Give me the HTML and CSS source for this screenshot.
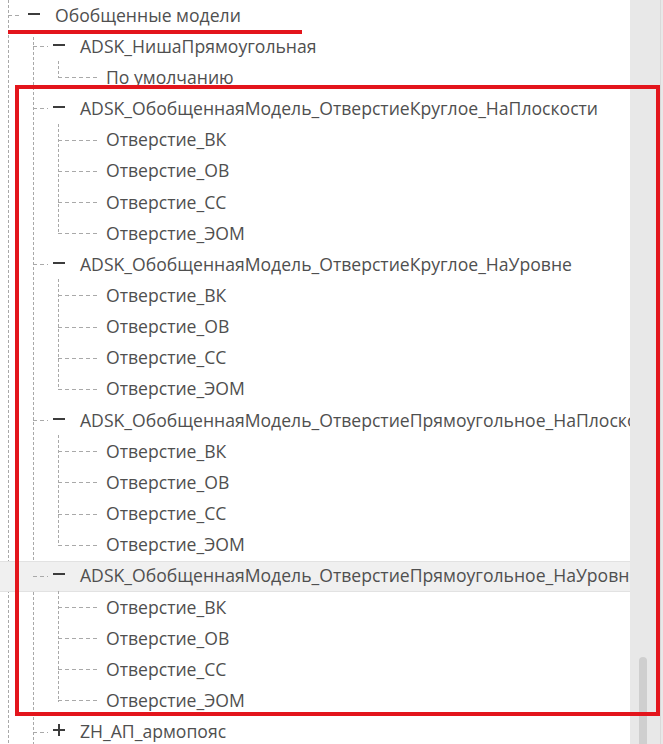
FILE: index.html
```html
<!DOCTYPE html>
<html>
<head>
    <meta charset="utf-8" />
    <title>Диспетчер проекта</title>
    <link rel="stylesheet" href="styles.css">
</head>
<body>
    <div class="browser">
        <div class="tree">
            <ul class="lvl0">
                <li>
                    <div class="row l0"><span class="toggle"></span><span class="label">Обобщенные модели</span></div>
                    <ul class="lvl1">
                        <li>
                            <div class="row l1"><span class="toggle"></span><span class="label">ADSK_НишаПрямоугольная</span></div>
                            <ul class="lvl2">
                                <li><div class="row l2"><span class="label">По умолчанию</span></div></li>
                            </ul>
                        </li>
                        <li>
                            <div class="row l1"><span class="toggle"></span><span class="label">ADSK_ОбобщеннаяМодель_ОтверстиеКруглое_НаПлоскости</span></div>
                            <ul class="lvl2">
                                <li><div class="row l2"><span class="label">Отверстие_ВК</span></div></li>
                                <li><div class="row l2"><span class="label">Отверстие_ОВ</span></div></li>
                                <li><div class="row l2"><span class="label">Отверстие_СС</span></div></li>
                                <li><div class="row l2"><span class="label">Отверстие_ЭОМ</span></div></li>
                            </ul>
                        </li>
                        <li>
                            <div class="row l1"><span class="toggle"></span><span class="label">ADSK_ОбобщеннаяМодель_ОтверстиеКруглое_НаУровне</span></div>
                            <ul class="lvl2">
                                <li><div class="row l2"><span class="label">Отверстие_ВК</span></div></li>
                                <li><div class="row l2"><span class="label">Отверстие_ОВ</span></div></li>
                                <li><div class="row l2"><span class="label">Отверстие_СС</span></div></li>
                                <li><div class="row l2"><span class="label">Отверстие_ЭОМ</span></div></li>
                            </ul>
                        </li>
                        <li>
                            <div class="row l1"><span class="toggle"></span><span class="label">ADSK_ОбобщеннаяМодель_ОтверстиеПрямоугольное_НаПлоскости</span></div>
                            <ul class="lvl2">
                                <li><div class="row l2"><span class="label">Отверстие_ВК</span></div></li>
                                <li><div class="row l2"><span class="label">Отверстие_ОВ</span></div></li>
                                <li><div class="row l2"><span class="label">Отверстие_СС</span></div></li>
                                <li><div class="row l2"><span class="label">Отверстие_ЭОМ</span></div></li>
                            </ul>
                        </li>
                        <li>
                            <div class="row l1 hover"><span class="toggle"></span><span class="label">ADSK_ОбобщеннаяМодель_ОтверстиеПрямоугольное_НаУровне</span></div>
                            <ul class="lvl2">
                                <li><div class="row l2"><span class="label">Отверстие_ВК</span></div></li>
                                <li><div class="row l2"><span class="label">Отверстие_ОВ</span></div></li>
                                <li><div class="row l2"><span class="label">Отверстие_СС</span></div></li>
                                <li><div class="row l2"><span class="label">Отверстие_ЭОМ</span></div></li>
                            </ul>
                        </li>
                        <li>
                            <div class="row l1"><span class="toggle plus"></span><span class="label">ZH_АП_армопояс</span></div>
                        </li>
                    </ul>
                </li>
            </ul>
        </div>
        <div class="scrollbar"><div class="thumb"></div></div>

        <!-- пометки поверх скриншота -->
        <div class="mark-line"></div>
        <div class="mark-box"></div>
    </div>
</body>
</html>
```

FILE: styles.css
```css
* {
    padding: 0;
    margin: 0;
}

html, body {
    height: 100%;
    overflow: hidden;
    background: #fff;
}

.browser {
    position: relative;
    display: flex;
    height: 744px;
    overflow: hidden;
    font-family: "Open Sans", "Noto Sans", sans-serif;
    font-size: 17.6px;
    color: #4f4f4f;
}

.tree {
    flex: 0 0 630px;
    height: 744px;
    overflow: hidden;
    /* линия корневого уровня */
    background: repeating-linear-gradient(to bottom, #a9a9a9 0 3px, transparent 3px 5px) 8px 0 / 1px 100% no-repeat;
}

.tree ul {
    list-style: none;
}

.tree li {
    position: relative;
}

    .lvl1 {
        position: relative;
    }

    .lvl1::before {
        content: "";
        position: absolute;
        left: 33px;
        top: 6px;
        bottom: 0;
        width: 1px;
        background: repeating-linear-gradient(to bottom, #a9a9a9 0 3px, transparent 3px 5px);
    }

    .lvl2 {
        position: relative;
    }

    .lvl2::before {
        content: "";
        position: absolute;
        left: 58px;
        top: -1px;
        bottom: 15px;
        width: 1px;
        background: repeating-linear-gradient(to bottom, #a9a9a9 0 3px, transparent 3px 5px);
    }

.row {
    position: relative;
    display: flex;
    align-items: center;
    height: 31.17px;
    white-space: nowrap;
}

    .row::before {
        content: "";
        position: absolute;
        top: 15px;
        height: 1px;
        background: repeating-linear-gradient(to right, #a9a9a9 0 4px, transparent 4px 7px);
    }

    .row.l0 {
        padding-left: 28px;
    }

        .row.l0::before {
            left: 8px;
            width: 12px;
        }

    .row.l1 {
        padding-left: 53px;
    }

        .row.l1::before {
            left: 33px;
            width: 15px;
        }

    .row.l2 {
        padding-left: 106px;
    }

        .row.l2::before {
            left: 58px;
            width: 39px;
        }

    .row.hover {
        background: #f0f0f0;
        box-shadow: inset 0 1px 0 #e2e2e2, inset 0 -1px 0 #e2e2e2;
    }

.label {
    flex-shrink: 0;
    margin-top: -2px;
}

.toggle {
    position: relative;
    flex-shrink: 0;
    width: 12px;
    height: 2px;
    margin-right: 15px;
    margin-top: -4px;
    background: #3c3c3c;
}

    .toggle.plus::after {
        content: "";
        position: absolute;
        left: 5px;
        top: -5px;
        width: 2px;
        height: 12px;
        background: #3c3c3c;
    }

.scrollbar {
    flex: 1;
    padding: 657px 0 0 9px;
    background: #e8e8e8;
    box-shadow: inset -2px 0 0 #e8e8e8, inset -3px 0 0 #d9d9d9;
}

    .scrollbar .thumb {
        width: 8px;
        height: 87px;
        border-radius: 4px 4px 0 0;
        background: #cfcfcf;
    }

.mark-line {
    position: absolute;
    left: 8px;
    top: 30px;
    width: 294px;
    height: 4px;
    background: #e3151c;
}

.mark-box {
    position: absolute;
    left: 15px;
    top: 85px;
    width: 645px;
    height: 631px;
    box-sizing: border-box;
    border: 4px solid #e3151c;
}
```
